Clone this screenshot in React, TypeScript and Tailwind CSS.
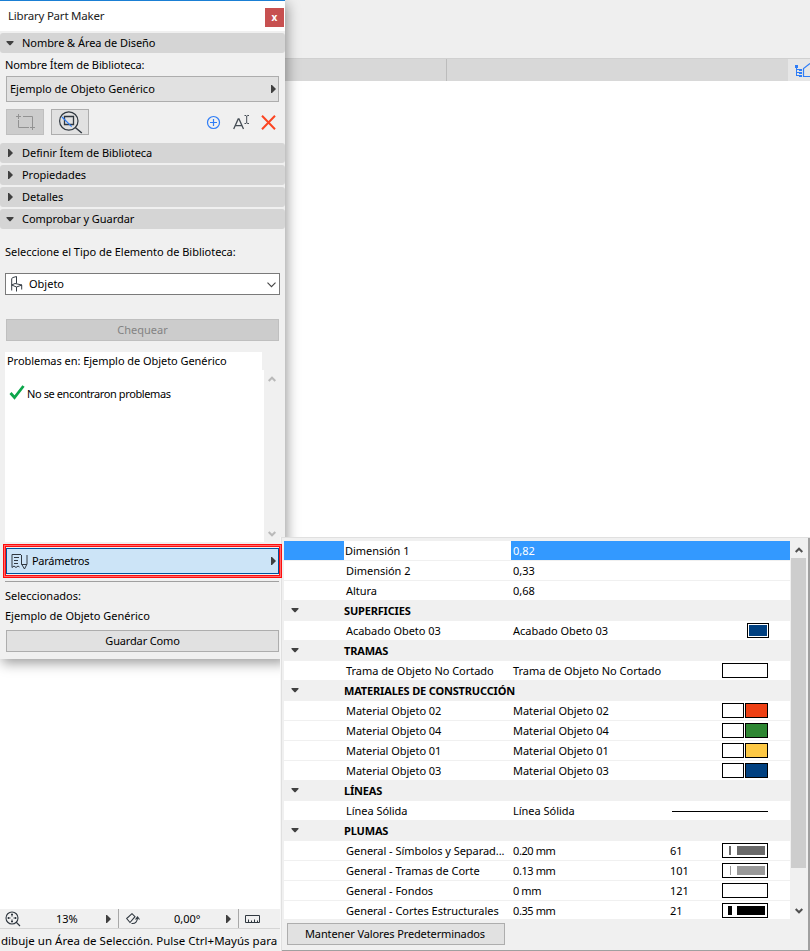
import type { ReactNode } from "react"
import clsx from "clsx"

type Row = {
  name: string
  value?: string
  group?: boolean
  selected?: boolean
  pen?: string
  preview?: ReactNode
}

const Box = ({ className }: { className?: string }) => (
  <div className={clsx("h-[15px] border border-black bg-white", className)} />
)

const Pair = ({ className }: { className: string }) => (
  <div className="flex gap-px">
    <Box className="w-[22px]" />
    <div className={clsx("h-[15px] w-[23px] border border-black", className)} />
  </div>
)

const Pen = ({ line, color }: { line: string; color: string }) => (
  <div className="flex h-[15px] w-[46px] items-center border border-black bg-white">
    <div className="flex w-[14px] justify-center">
      <div className={clsx("h-[9px]", line, color)} />
    </div>
    <div className={clsx("h-[9px] w-7", color)} />
  </div>
)

const rows: Row[] = [
  { name: "Dimensión 1", value: "0,82", selected: true },
  { name: "Dimensión 2", value: "0,33" },
  { name: "Altura", value: "0,68" },
  { name: "SUPERFICIES", group: true },
  {
    name: "Acabado Obeto 03",
    value: "Acabado Obeto 03",
    preview: (
      <div className="-mr-px h-[15px] w-[22px] border border-black bg-white p-px">
        <div className="h-full bg-[#004080]" />
      </div>
    ),
  },
  { name: "TRAMAS", group: true },
  { name: "Trama de Objeto No Cortado", value: "Trama de Objeto No Cortado", preview: <Box className="w-[46px]" /> },
  { name: "MATERIALES DE CONSTRUCCIÓN", group: true },
  { name: "Material Objeto 02", value: "Material Objeto 02", preview: <Pair className="bg-[#ee4014]" /> },
  { name: "Material Objeto 04", value: "Material Objeto 04", preview: <Pair className="bg-[#2d8632]" /> },
  { name: "Material Objeto 01", value: "Material Objeto 01", preview: <Pair className="bg-[#fdc844]" /> },
  { name: "Material Objeto 03", value: "Material Objeto 03", preview: <Pair className="bg-[#004080]" /> },
  { name: "LÍNEAS", group: true },
  { name: "Línea Sólida", value: "Línea Sólida", preview: <div className="mt-px h-px w-24 bg-black" /> },
  { name: "PLUMAS", group: true },
  { name: "General - Símbolos y Separad...", value: "0.20 mm", pen: "61", preview: <Pen line="w-0.5" color="bg-[#696969]" /> },
  { name: "General - Tramas de Corte", value: "0.13 mm", pen: "101", preview: <Pen line="w-px" color="bg-[#999999]" /> },
  { name: "General - Fondos", value: "0 mm", pen: "121", preview: <Box className="w-[46px]" /> },
  { name: "General - Cortes Estructurales", value: "0.35 mm", pen: "21", preview: <Pen line="w-1" color="bg-black" /> },
]

const DownTriangle = () => (
  <svg width="8" height="5" viewBox="0 0 8 5" fill="#404040">
    <path d="M.5 0h7v1L4.500 4.300h-1L.5 1z" />
  </svg>
)

const RightTriangle = () => (
  <svg width="5" height="8" viewBox="0 0 5 8" fill="#404040">
    <path d="M0 0h1l3.500 3.500v1L1 8H0z" />
  </svg>
)

const Chevron = ({ up, color }: { up?: boolean; color: string }) => (
  <svg width="8" height="6" viewBox="0 0 8 6" fill="none" stroke={color} strokeWidth="2">
    <path d={up ? "M.7 5L4 1.7 7.3 5" : "M.7 1L4 4.3 7.3 1"} />
  </svg>
)

function SectionHeader({ title, open }: { title: string; open?: boolean }) {
  return (
    <div className="flex h-5 items-center rounded-[3px] bg-[#d5d5d5]">
      <div className={clsx("flex w-4 shrink-0", open ? "pt-px pl-1.5" : "pl-2")}>
        {open ? <DownTriangle /> : <RightTriangle />}
      </div>
      <span className="ml-1.5 pb-0.5 tracking-[-0.05px]">{title}</span>
    </div>
  )
}

function LibraryPartMaker() {
  return (
    <div className="absolute top-0 left-0 flex h-[659px] w-[285px] flex-col border-t border-[#1a7fd4] bg-[#f0f0f0] shadow-[2px_4px_12px_rgba(0,0,0,0.4)]">
      <div className="flex h-[30px] shrink-0 justify-between bg-white pr-px pl-2">
        <span className="mt-1.5 text-[11.5px] leading-[18px] tracking-[-0.22px] text-[#222]">Library Part Maker</span>
        <div className="mt-[7px] flex h-[19px] w-[19px] items-center justify-center bg-[#c75050] pb-px text-[10px] leading-none font-bold text-white">
          x
        </div>
      </div>

      <div className="mt-0.5">
        <SectionHeader title="Nombre & Área de Diseño" open />
      </div>
      <div className="mt-1 flex h-[19px] items-center pb-[5px] pl-[5px] tracking-[-0.1px]">Nombre Ítem de Biblioteca:</div>
      <div className="mx-1.5 flex h-[26px] items-center justify-between border border-[#adadad] bg-[#e1e1e1] pr-0.5 pl-[3px]">
        <span className="pb-0.5">Ejemplo de Objeto Genérico</span>
        <RightTriangle />
      </div>

      <div className="mt-[7px] flex h-[26px] shrink-0 items-center pl-1.5">
        <div className="flex h-[26px] w-[38px] items-center justify-center border border-[#bfbfbf] bg-[#cccccc]">
          <svg width="22" height="18" viewBox="0 0 22 18" fill="none" stroke="#929292">
            <path d="M4.5 1v5M2 3.500h5M4.500 7v7.500H15M9 3.500h9.500V12M18.500 12v5M16 14.500h5" />
          </svg>
        </div>
        <div className="ml-[7px] flex h-[26px] w-[38px] items-center justify-center border border-[#adadad] bg-[#e1e1e1]">
          <svg width="26" height="24" viewBox="0 0 26 24" fill="none" stroke="#303840" strokeWidth="1.2">
            <circle cx="11.800" cy="11" r="9.200" />
            <path d="M7.500 6.500h9v8h-9z" strokeWidth="1.300" />
            <path d="M18.300 17.500l6.500 5.500" strokeWidth="1.500" />
            <path d="M5 7l9.700 9.700" stroke="#2f7df6" />
          </svg>
        </div>
        <svg className="ml-[117px]" width="15" height="15" viewBox="0 0 15 15" fill="none" stroke="#2f7df6" strokeWidth="1.2">
          <circle cx="7.500" cy="7.500" r="6" />
          <path d="M7.500 4v7M4 7.500h7" />
        </svg>
        <svg className="ml-3" width="18" height="18" viewBox="0 0 18 18" fill="none" stroke="#454d55" strokeWidth="1.300">
          <path d="M.7 16L5.200 6h.8l4.500 10M2.500 12.700h6.500" />
          <path d="M11.500 2.500h1.500l.7.700.7-.7h1.600M13.700 3v7M11.500 10.500h1.500l.7-.7.7.7h1.600" strokeWidth="1" />
        </svg>
        <svg className="ml-2.5" width="15" height="15" viewBox="0 0 15 15" fill="none" stroke="#fb4522" strokeWidth="2">
          <path d="M1 .8l13 13.400M14 .8L1 14.200" />
        </svg>
      </div>

      <div className="mt-2 flex flex-col gap-0.5">
        <SectionHeader title="Definir Ítem de Biblioteca" />
        <SectionHeader title="Propiedades" />
        <SectionHeader title="Detalles" />
        <SectionHeader title="Comprobar y Guardar" open />
      </div>

      <div className="mt-[13px] flex h-5 items-center pb-0.5 pl-[5px] tracking-[-0.02px]">
        Seleccione el Tipo de Elemento de Biblioteca:
      </div>
      <div className="mt-[11px] mr-[5px] ml-[5px] flex h-[22px] items-center border border-[#7a7a7a] bg-white pr-[3px] pl-[5px]">
        <svg width="12" height="16" viewBox="0 0 12 16" fill="none" stroke="#353d45">
          <path d="M.7 14.500V2.500L2 1.500l3.500-1v7M.7 9L4 7.500l7 1.500-5.500 2L.7 9M5.500 11v4.500M10.700 9v4.500" />
        </svg>
        <span className="ml-1.5 grow pb-0.5">Objeto</span>
        <svg className="mt-px" width="9" height="6" viewBox="0 0 9 6" fill="none" stroke="#444" strokeWidth="1.100">
          <path d="M.5.700l4 4 4-4" />
        </svg>
      </div>

      <div className="mx-1.5 mt-6 flex h-[22px] items-center justify-center border border-[#bfbfbf] bg-[#cccccc] pb-0.5 text-[#838383]">
        Chequear
      </div>

      <div className="mt-[11px] ml-[5px] flex h-[18px] w-[257px] items-center bg-white pb-0.5 pl-0.5 tracking-[-0.05px]">
        Problemas en: Ejemplo de Objeto Genérico
      </div>
      <div className="ml-[5px] flex h-[172px]">
        <div className="flex w-[259px] items-start bg-white pt-[14px] pl-1">
          <svg width="16" height="16" viewBox="0 0 16 16" fill="none" stroke="#0ca64b" strokeWidth="2.800">
            <path d="M1.500 9l4 4.500L14.500 2" />
          </svg>
          <span className="ml-0.5 pt-0.5 leading-4 tracking-[-0.4px]">No se encontraron problemas</span>
        </div>
        <div className="flex w-4 flex-col items-center justify-between pt-1.5 pb-[5px]">
          <Chevron up color="#b9b9b9" />
          <Chevron color="#b9b9b9" />
        </div>
      </div>

      {/* Highlight frame, stays above the popup edge */}
      <div className="relative z-10 mt-0.5 ml-[3px] h-[34px] w-[279px] shrink-0 border border-[#ff0d0d] px-0.5 pt-[3px] shadow-[inset_0_0_0_1px_#ff6a6a,inset_0_0_0_2px_#ff0d0d]">
        <div className="flex h-[26px] w-[273px] items-center border border-[#00539c] bg-[#cce4f7] pr-0.5 pl-1">
          <svg className="mt-px" width="17" height="17" viewBox="0 0 17 17" fill="none" stroke="#303840">
            <path d="M10 1.500H1v13l2-1.500 2 1.500 2-1.500 1.500 1M3 4.500h5M3 7.500h4M3 10.500h4M10.500 2v9l3 5 2.500-5V2M10.500 11.500h5.500" />
          </svg>
          <span className="ml-1 grow pb-0.5 tracking-[-0.28px]">Parámetros</span>
          <RightTriangle />
        </div>
      </div>

      <div className="mt-[3px] ml-[5px] h-px w-[274px] shrink-0 bg-[#a0a0a0]" />
      <div className="mt-1 flex h-5 items-center pb-0.5 pl-[5px]">Seleccionados:</div>
      <div className="flex h-5 items-center pb-0.5 pl-[5px]">Ejemplo de Objeto Genérico</div>
      <div className="mx-1.5 mt-1 flex h-[22px] items-center justify-center border border-[#adadad] bg-[#e1e1e1] pb-0.5 tracking-[-0.15px]">
        Guardar Como
      </div>
    </div>
  )
}

function ParameterRow({ row }: { row: Row }) {
  if (row.group) {
    return (
      <div className="flex h-5 shrink-0 items-center bg-[#f0f0f0] pb-px font-bold">
        <div className="w-[60px] pl-[7px]">
          <DownTriangle />
        </div>
        <span className="tracking-[-0.17px]">{row.name}</span>
      </div>
    )
  }
  return (
    <div className="flex h-5 shrink-0 items-center border-b border-[#f0f0f0]">
      <div className={clsx("h-full w-[60px]", row.selected && "bg-[#3399ff]")} />
      <span className={clsx("w-[167px] tracking-[-0.04px] whitespace-nowrap", row.selected ? "pl-px" : "pl-0.5")}>
        {row.name}
      </span>
      <div className={clsx("flex h-full grow items-center pl-0.5", row.selected && "bg-[#3399ff] text-white")}>
        <span className={clsx("w-[157px] whitespace-nowrap", row.pen ? "tracking-[-0.4px]" : "tracking-[-0.02px]")}>
          {row.value}
        </span>
        <span>{row.pen}</span>
        <div className="mr-[22px] ml-auto">{row.preview}</div>
      </div>
    </div>
  )
}

function ParametersPopup() {
  return (
    <div className="absolute top-[537px] left-[281px] h-[414px] w-[529px] border-t border-l border-[#e0e0e0] bg-[#f0f0f0] shadow-[-1px_0_#f7f7f7]">
      <div className="h-[413px] border-r-2 border-b border-[#a0a0a0] pt-[3px] pl-0.5">
        <div className="flex h-[378px]">
          <div className="flex w-[506px] flex-col overflow-hidden bg-white">
            {rows.map((row, i) => (
              <ParameterRow key={i} row={row} />
            ))}
          </div>
          <div className="ml-px flex w-[15px] flex-col items-center pt-1.5">
            <Chevron up color="#505050" />
            <div className="mt-[5px] h-[310px] w-full bg-[#cdcdcd]" />
            <div className="mt-10">
              <Chevron color="#505050" />
            </div>
          </div>
        </div>
        <div className="mt-1 ml-[3px] flex h-[22px] w-[218px] items-center justify-center border border-[#adadad] bg-[#e1e1e1] pr-0.5 pb-0.5 tracking-[-0.12px]">
          Mantener Valores Predeterminados
        </div>
      </div>
    </div>
  )
}

export default function App() {
  return (
    <div className="relative flex h-[951px] w-[810px] flex-col overflow-hidden bg-white font-['Noto_Sans','Open_Sans',sans-serif] text-[11px] leading-[15px] text-black">
      <div className="h-[58px] shrink-0 bg-[#efefef]" />
      <div className="flex h-[23px] shrink-0 border-t border-[#d0d0d0] bg-[#d8d8d8]">
        <div className="w-[447px] border-r border-[#bcbcbc]" />
        <div className="grow" />
        <div className="w-[22px] bg-[#e6e6e6] pt-1 pl-[7px]">
          <svg width="15" height="15" viewBox="0 0 15 15" fill="none" stroke="#2f7df6">
            <path d="M0 2h3v3H0zM4 6h3v2H4zM4 9h3v2H4zM4 12h3v2H4z" fill="#2f7df6" stroke="none" />
            <path d="M1.500 5v8M1.500 6.500H4M1.500 9.500H4M1.500 12.500H4" />
            <path d="M15 .5L8.500 5.500v8H15" strokeWidth="1.200" />
          </svg>
        </div>
      </div>
      <div className="grow" />

      <div className="flex h-5 shrink-0 border-b border-[#d5d5d5] bg-[#f0f0f0]">
        <div className="flex w-[119px] items-center border-r border-[#a8a8a8] pl-[5px]">
          <svg width="16" height="16" viewBox="0 0 16 16" fill="none" stroke="#303840" strokeWidth="1.100">
            <circle cx="7" cy="7" r="6" />
            <path d="M11 11l4 4M7 2.500v3M7 8.500v3M2.500 7h3M8.500 7h3M6 3.500h2M6 10.500h2M3.500 6v2M10.500 6v2" />
          </svg>
          <span className="ml-[35px] grow">13%</span>
          <span className="mr-[7px]">
            <RightTriangle />
          </span>
        </div>
        <div className="flex w-[120px] items-center border-r border-[#a8a8a8] pl-[7px]">
          <svg width="14" height="12" viewBox="0 0 14 12" fill="none" stroke="#303840" strokeWidth="1.100">
            <path d="M.7 5.500L6 .7l3 3L4 9.500zM5.500 10.500c4 .5 6-2 6-6M9.500 6.500l2-2.500 2 2.500" />
          </svg>
          <span className="ml-[34px] grow">0,00°</span>
          <span className="mr-[7px]">
            <RightTriangle />
          </span>
        </div>
        <div className="flex items-center pl-1.5">
          <svg width="15" height="8" viewBox="0 0 15 8" fill="none" stroke="#303840">
            <path d="M.5 .5h14v7H.5zM3.500 4.500v3M6.500 5.500v2M9.500 4.500v3M12.500 5.500v2" />
          </svg>
        </div>
      </div>
      <div className="flex h-[22px] shrink-0 items-center bg-[#f0f0f0] pt-px pl-px text-[11.5px] tracking-[0.02px] whitespace-nowrap">
        dibuje un Área de Selección. Pulse Ctrl+Mayús para añadir
      </div>

      <LibraryPartMaker />
      <ParametersPopup />
    </div>
  )
}
